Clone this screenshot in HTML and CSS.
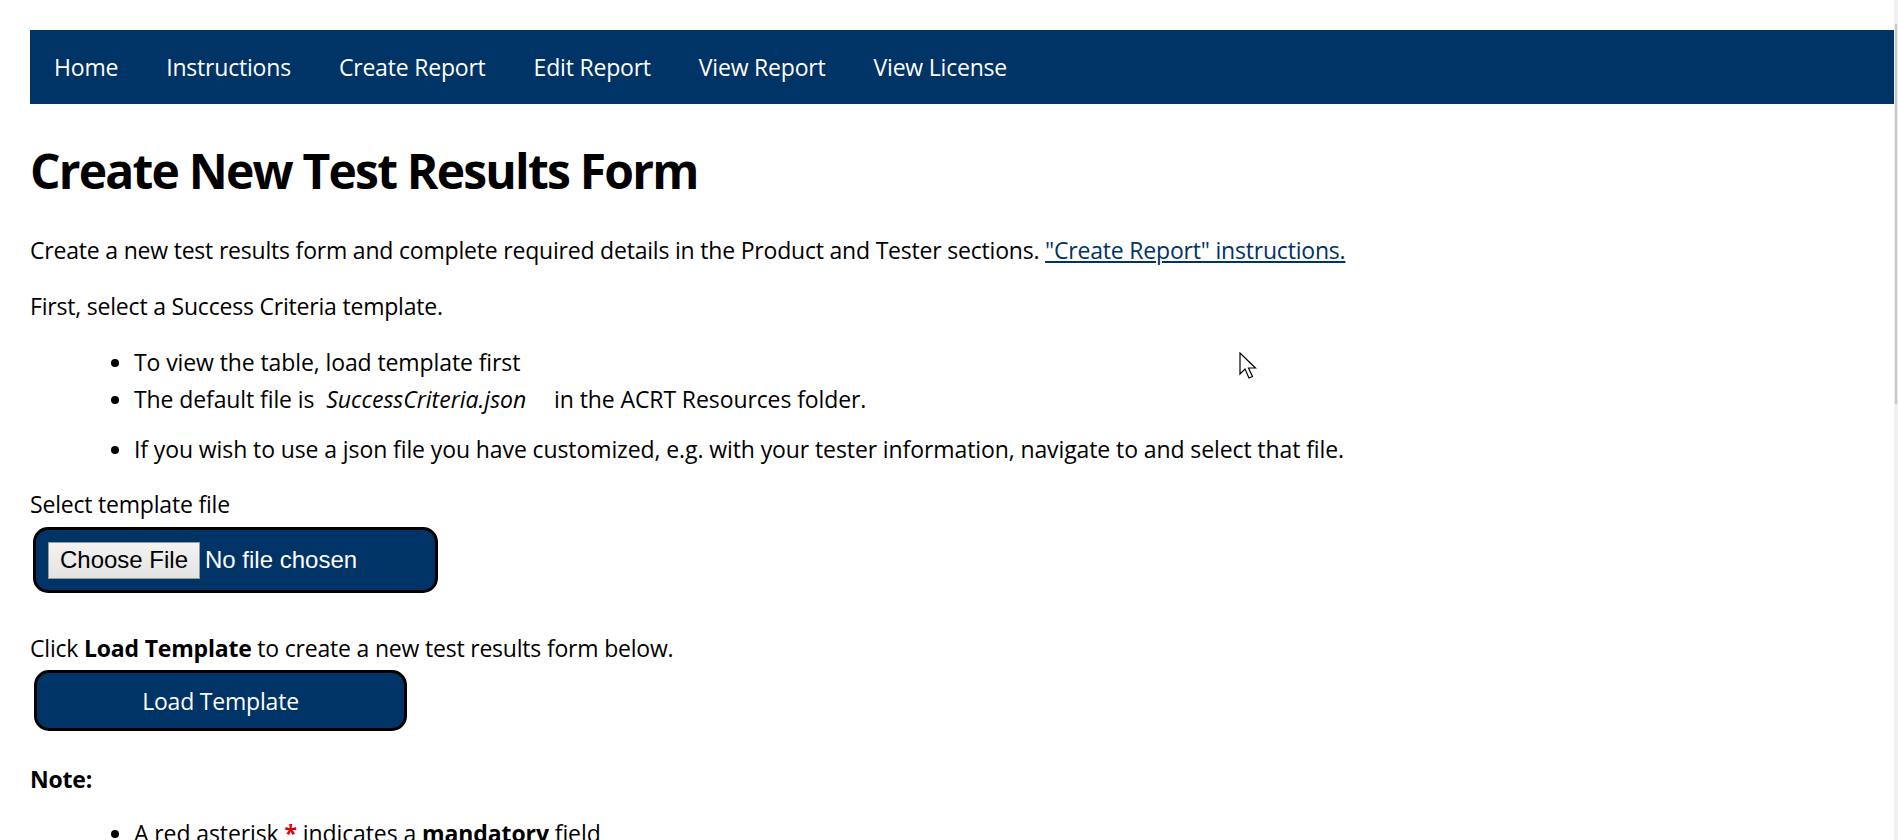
FILE: index.html
```html
<!DOCTYPE html>
<html lang="en">
<head>
<meta charset="utf-8">
<title>Create New Test Results Form</title>
<link rel="stylesheet" href="styles.css">
</head>
<body>
<div class="page">
  <nav class="topnav">
    <a class="navlink" href="#">Home</a>
    <a class="navlink" href="#">Instructions</a>
    <a class="navlink" href="#">Create Report</a>
    <a class="navlink" href="#">Edit Report</a>
    <a class="navlink" href="#">View Report</a>
    <a class="navlink" href="#">View License</a>
  </nav>
  <main class="content">
    <h1 class="title">Create New Test Results Form</h1>
    <p class="para">Create a new test results form and complete required details in the Product and Tester sections. <a class="doclink" href="#">"Create Report" instructions.</a></p>
    <p class="para">First, select a Success Criteria template.</p>
    <ul class="list">
      <li class="item">To view the table, load template first</li>
      <li class="item item-gap">The default file is <em class="filename">SuccessCriteria.json</em> in the ACRT Resources folder.</li>
      <li class="item">If you wish to use a json file you have customized, e.g. with your tester information, navigate to and select that file.</li>
    </ul>
    <div class="label">Select template file</div>
    <div class="filebox">
      <span class="choose">Choose File</span>
      <span class="nofile">No file chosen</span>
    </div>
    <p class="para para-click">Click <strong>Load Template</strong> to create a new test results form below.</p>
    <button class="loadbtn" type="button">Load Template</button>
    <p class="para para-note"><strong>Note:</strong></p>
    <ul class="list list-note">
      <li class="item">A red asterisk <span class="req">*</span> indicates a <strong>mandatory</strong> field</li>
    </ul>
  </main>
</div>
<div class="scrollbar"><div class="thumb"></div></div>
<svg class="cursor" width="20" height="28" viewBox="0 0 20 28" aria-hidden="true">
  <path d="M1 1 L1 22 L6 17 L10 26 L13.5 24.5 L9.5 16 L16.5 16 Z" fill="#fff" stroke="#000" stroke-width="1.2" stroke-linejoin="miter"/>
</svg>
</body>
</html>
```

FILE: styles.css
```css
html, body {
  margin: 0;
  padding: 0;
  background: #fff;
}
body {
  font-family: "Open Sans", "Noto Sans", "Liberation Sans", sans-serif;
  font-size: 23px;
  color: #000;
  overflow: hidden;
}
.page {
  padding: 30px 4px 0 30px;
}
.topnav {
  display: flex;
  align-items: center;
  height: 74px;
  background: #003366;
  padding-left: 24px;
  gap: 48px;
}
.navlink {
  color: #fff;
  text-decoration: none;
  font-size: 23px;
  letter-spacing: -0.2px;
}
.content {
  display: block;
}
.title {
  font-size: 48px;
  font-weight: 700;
  line-height: 60px;
  margin: 37px 0 0;
  letter-spacing: -1.8px;
}
.para {
  margin: 32px 0 0;
  line-height: 34px;
  letter-spacing: -0.2px;
}
.para + .para {
  margin-top: 22px;
}
.doclink {
  color: #003366;
  text-decoration: underline;
}
.list {
  margin: 22px 0 0;
  padding-left: 104px;
  list-style: disc;
}
.item {
  line-height: 34px;
  margin-bottom: 3px;
  letter-spacing: -0.1px;
}
.item-gap {
  margin-bottom: 16px;
}
.filename {
  display: inline-block;
  margin: 0 22px 0 6px;
  letter-spacing: 0;
}
.label {
  margin-top: 21px;
  line-height: 34px;
  letter-spacing: -0.2px;
}
.filebox {
  display: flex;
  align-items: center;
  gap: 5px;
  box-sizing: border-box;
  width: 405px;
  height: 66px;
  margin: 6px 0 0 3px;
  padding: 0 12px;
  background: #003366;
  border: 3px solid #000;
  border-radius: 15px;
  font-family: "Liberation Sans", Arial, sans-serif;
  font-size: 24px;
}
.choose {
  box-sizing: border-box;
  width: 152px;
  height: 37px;
  display: flex;
  align-items: center;
  justify-content: center;
  background: linear-gradient(#f3f3f3, #e3e3e3);
  border: 1px solid #9a9a9a;
  color: #000;
}
.nofile {
  color: #fff;
}
.para-click {
  margin-top: 38px;
}
.loadbtn {
  display: block;
  box-sizing: border-box;
  width: 373px;
  height: 61px;
  margin: 5px 0 0 4px;
  background: #003366;
  color: #fff;
  border: 3px solid #000;
  border-radius: 15px;
  font-family: "Open Sans", "Noto Sans", sans-serif;
  font-size: 23px;
  letter-spacing: -0.2px;
  padding: 0;
}
.para.para-note {
  margin-top: 31px;
}
.list-note {
  margin-top: 20px;
}
.req {
  color: #e00000;
  font-weight: 700;
}
.scrollbar {
  position: fixed;
  top: 0;
  right: 0;
  width: 4px;
  height: 100%;
  background: #f0f0f0;
}
.thumb {
  position: absolute;
  top: 24px;
  left: 1px;
  width: 2px;
  height: 380px;
  background: #c8c8c8;
}
.cursor {
  position: absolute;
  left: 1239px;
  top: 352px;
}
```
